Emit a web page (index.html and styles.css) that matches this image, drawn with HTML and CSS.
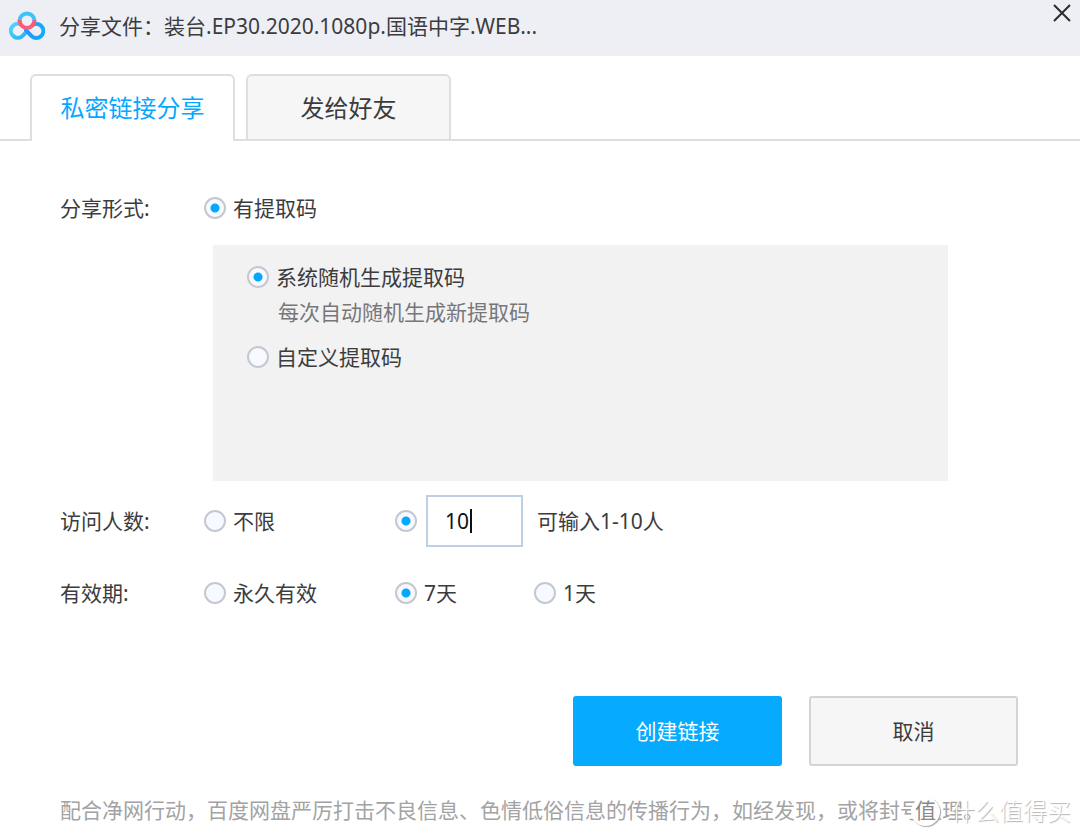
FILE: index.html
```html
<!DOCTYPE html>
<html lang="zh-CN">
<head>
<meta charset="utf-8">
<meta name="viewport" content="width=device-width, initial-scale=1">
<title>分享文件</title>
<link rel="stylesheet" href="styles.css">
</head>
<body>
<main class="dialog">
  <header class="titlebar">
    <svg class="logo" viewBox="0 0 36 30" fill="none" stroke-width="4" aria-hidden="true">
      <defs>
        <linearGradient id="left" x1="0" y1="0" x2="1" y2="1"><stop offset="0" stop-color="#52d8fb"/><stop offset="1" stop-color="#22aefb"/></linearGradient>
        <linearGradient id="right" x1="0" y1="0" x2="1" y2="0"><stop offset="0" stop-color="#2196f8"/><stop offset="1" stop-color="#11acff"/></linearGradient>
      </defs>
      <path stroke="url(#left)" d="M19 19 L14 24.500 A7 7 0 1 1 12 13.500"/>
      <path stroke="url(#right)" stroke-linecap="round" d="M17 19 L22.500 25 A7 7 0 1 0 24.500 13.500"/>
      <path stroke="#3dc5fb" d="M10.500 10 A7.500 7.500 0 0 1 25.500 10"/>
      <path stroke="#fb5b78" d="M10.500 9 A7.500 8 0 0 0 25.500 9"/>
    </svg>
    <h1 class="title">分享文件：装台.EP30.2020.1080p.国语中字.WEB...</h1>
    <button class="close" type="button" aria-label="关闭">
      <svg viewBox="0 0 18 18" fill="none" stroke="#2c2c2e" stroke-width="2" aria-hidden="true"><path d="M1 1 L17 17 M17 1 L1 17"/></svg>
    </button>
  </header>

  <nav class="tabs" role="tablist">
    <button class="tab tab-active" type="button" role="tab" aria-selected="true">私密链接分享</button>
    <button class="tab" type="button" role="tab" aria-selected="false">发给好友</button>
  </nav>

  <form class="form">
    <div class="row" role="radiogroup" aria-labelledby="mode">
      <span class="row-label" id="mode">分享形式:</span>
      <label class="option"><input class="radio" type="radio" name="mode" checked>有提取码</label>
    </div>

    <div class="panel">
      <label class="option"><input class="radio" type="radio" name="code" checked>系统随机生成提取码</label>
      <p class="hint">每次自动随机生成新提取码</p>
      <label class="option"><input class="radio" type="radio" name="code">自定义提取码</label>
    </div>

    <div class="row row-visitors" role="radiogroup" aria-labelledby="visitors">
      <span class="row-label" id="visitors">访问人数:</span>
      <div class="options">
        <label class="option"><input class="radio" type="radio" name="visitors">不限</label>
        <div class="limit">
          <input class="radio" type="radio" name="visitors" aria-label="限制人数" checked>
          <span class="field"><input class="count" id="count" type="text" value="10"><span class="caret"></span></span>
          <label class="count-note" for="count">可输入1-10人</label>
        </div>
      </div>
    </div>

    <div class="row" role="radiogroup" aria-labelledby="expiry">
      <span class="row-label" id="expiry">有效期:</span>
      <div class="options">
        <label class="option"><input class="radio" type="radio" name="expiry">永久有效</label>
        <label class="option"><input class="radio" type="radio" name="expiry" checked>7天</label>
        <label class="option"><input class="radio" type="radio" name="expiry">1天</label>
      </div>
    </div>

    <div class="actions">
      <button class="btn btn-primary" type="button">创建链接</button>
      <button class="btn" type="button">取消</button>
    </div>
  </form>

  <footer class="notice">配合净网行动，百度网盘严厉打击不良信息、色情低俗信息的传播行为，如经发现，或将封号处理。</footer>
  <div class="watermark"><span class="badge">值</span><span class="brand">什么值得买</span></div>
</main>
</body>
</html>
```
FILE: styles.css
```css
* { box-sizing: border-box; }

body {
  margin: 0;
  background: #fff;
  color: #3c3c3e;
  font: 21px/32px "Noto Sans", "Noto Sans CJK SC", sans-serif;
}

button, input { font: inherit; color: inherit; margin: 0; }
button { cursor: pointer; }

.dialog { position: relative; }

.titlebar {
  display: flex;
  align-items: center;
  height: 56px;
  padding: 0 0 4px 9px;
  background: #eeeff5;
}
.logo { width: 36px; height: 30px; flex: none; }
.title { flex: 1; margin: 0 0 0 14px; font-size: 21px; font-weight: 400; }
.close {
  align-self: flex-start;
  display: flex;
  padding: 4px 9px;
  border: 0;
  background: none;
}
.close svg { width: 18px; height: 18px; }

.tabs {
  display: flex;
  gap: 11px;
  margin-top: 18px;
  padding-left: 30px;
  border-bottom: 2px solid #dedede;
}
.tab {
  width: 205px;
  height: 65px;
  padding: 0;
  border: 2px solid #dedede;
  border-bottom: 0;
  border-radius: 6px 6px 0 0;
  background: #f6f6f6;
  font-size: 24px;
}
.tab-active { height: 67px; margin-bottom: -2px; padding-bottom: 2px; background: #fff; color: #06a7ff; }

.form { padding: 51px 62px 0 60px; }
.row { display: flex; align-items: center; min-height: 32px; }
.row-label { width: 144px; flex: none; }
.options { display: grid; grid-template-columns: 191px 139px 1fr; align-items: center; flex: 1; }
.option { display: flex; align-items: center; gap: 7px; }

.radio {
  appearance: none;
  flex: none;
  width: 22px;
  height: 22px;
  border: 2px solid #c4c8d0;
  border-radius: 50%;
  background: #f6f9ff;
}
.radio:checked { background: radial-gradient(circle, #06a7ff 4px, #f6f9ff 5px); }

.panel {
  min-height: 236px;
  margin: 21px 70px 14px 153px;
  padding: 16px 34px;
  background: #f2f2f2;
}
.hint { margin: 3px 0 13px 31px; color: #77777a; }

.row-visitors { margin-bottom: 30px; }
.limit { grid-column: 2 / 4; display: flex; align-items: center; }
.field { position: relative; margin: 0 14px 0 9px; }
.count {
  display: block;
  width: 97px;
  height: 52px;
  padding: 0 17px;
  border: 2px solid #bfcfe3;
  background: #fff;
  color: #111;
  outline: 0;
}
.caret { position: absolute; left: 44px; top: 14px; width: 2px; height: 24px; background: #111; }

.actions { display: flex; justify-content: flex-end; gap: 27px; margin-top: 87px; }
.btn {
  width: 209px;
  height: 70px;
  padding: 0;
  border: 2px solid #d4d4d4;
  border-radius: 3px;
  background: #f6f6f6;
}
.btn-primary { border-color: #06abff; background: #06abff; color: #fff; }

.notice { padding: 28px 0 10px 60px; color: #a3a3a5; }

.watermark {
  position: absolute;
  right: 9px;
  bottom: 9px;
  display: flex;
  align-items: center;
  gap: 11px;
  color: #fff;
  font-size: 24px;
  font-weight: 300;
  text-shadow: 1px 1px 1px #b0b0b0;
}
.badge {
  width: 29px;
  height: 29px;
  border-radius: 50%;
  background: #fff;
  box-shadow: 1px 1px 1px #a8a8a8;
  color: #88888a;
  font-size: 21px;
  font-weight: 400;
  line-height: 27px;
  text-align: center;
  text-shadow: none;
}
```
